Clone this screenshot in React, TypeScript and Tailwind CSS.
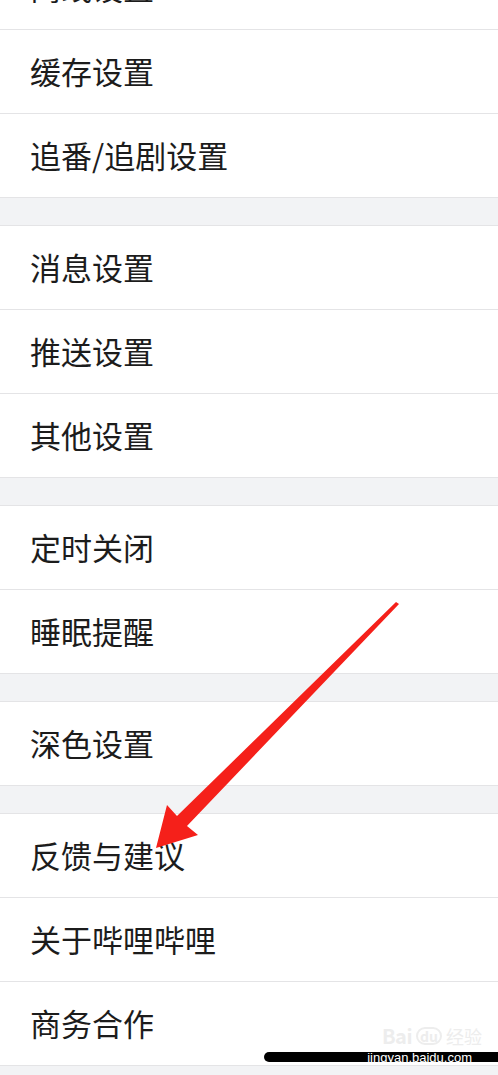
const sections: string[][] = [
  ["离线设置", "缓存设置", "追番/追剧设置"],
  ["消息设置", "推送设置", "其他设置"],
  ["定时关闭", "睡眠提醒"],
  ["深色设置"],
  ["反馈与建议", "关于哔哩哔哩", "商务合作"],
];

function Row({ label }: { label: string }) {
  return (
    <div className="h-[84px] flex items-center pl-[30px] pb-[3px] bg-white border-b border-[#e4e4e6]">
      <span className="text-[31px] leading-none text-[#1c1c1c]">{label}</span>
    </div>
  );
}

export default function App() {
  return (
    <div
      className="relative w-[498px] h-[1075px] overflow-hidden bg-[#f2f3f5]"
      style={{ fontFamily: '"Noto Sans CJK SC", "Noto Sans", sans-serif' }}
    >
      <div className="-mt-[54px]">
        {sections.map((items, i) => (
          <div key={i}>
            {i > 0 && <div className="h-[28px] bg-[#f2f3f5] border-b border-[#e4e4e6]" />}
            {items.map((label) => (
              <Row key={label} label={label} />
            ))}
          </div>
        ))}
      </div>

      {/* red arrow overlay */}
      <svg
        className="absolute left-0 top-0 pointer-events-none"
        width="498"
        height="1075"
        viewBox="0 0 498 1075"
      >
        <polygon
          points="399,604 187,826 198,835 156,848 167,805 177,816 396,602"
          fill="#f5201a"
        />
      </svg>

      {/* watermark */}
      <div className="absolute left-[382px] top-[1026px] flex items-center gap-1 text-[#ededed] text-[20px] leading-none font-bold">
        <span className="tracking-tight">Bai</span>
        <span className="text-[14px] border-2 border-[#ededed] rounded-full px-[2px]">du</span>
        <span className="text-[18px] font-normal">经验</span>
      </div>
      <div className="absolute left-[264px] top-[1052px] w-[234px] h-[10px] bg-black rounded-l-full flex items-center justify-end pr-[26px]">
        <span className="text-white text-[13px] leading-none" style={{ fontFamily: '"Liberation Sans", sans-serif' }}>
          jingyan.baidu.com
        </span>
      </div>
    </div>
  );
}
